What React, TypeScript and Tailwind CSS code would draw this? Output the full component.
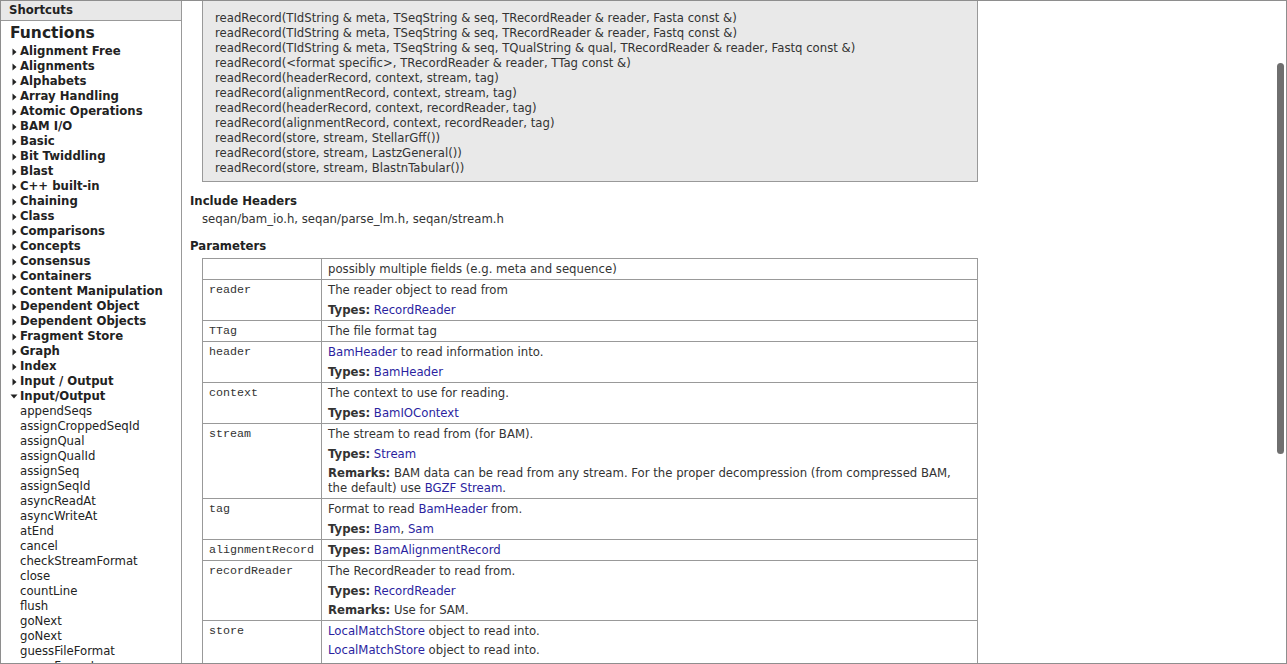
import React from "react";

const sans = "font-['DejaVu_Sans',Verdana,sans-serif]";
const mono = "font-['Liberation_Mono','Courier_New',monospace]";

const groups = [
  "Alignment Free",
  "Alignments",
  "Alphabets",
  "Array Handling",
  "Atomic Operations",
  "BAM I/O",
  "Basic",
  "Bit Twiddling",
  "Blast",
  "C++ built-in",
  "Chaining",
  "Class",
  "Comparisons",
  "Concepts",
  "Consensus",
  "Containers",
  "Content Manipulation",
  "Dependent Object",
  "Dependent Objects",
  "Fragment Store",
  "Graph",
  "Index",
  "Input / Output",
];

const ioFunctions = [
  "appendSeqs",
  "assignCroppedSeqId",
  "assignQual",
  "assignQualId",
  "assignSeq",
  "assignSeqId",
  "asyncReadAt",
  "asyncWriteAt",
  "atEnd",
  "cancel",
  "checkStreamFormat",
  "close",
  "countLine",
  "flush",
  "goNext",
  "goNext",
  "guessFileFormat",
  "guessFormat",
];

const signatures = [
  "readRecord(TIdString & meta, TSeqString & seq, TRecordReader & reader, Fasta const &)",
  "readRecord(TIdString & meta, TSeqString & seq, TRecordReader & reader, Fastq const &)",
  "readRecord(TIdString & meta, TSeqString & seq, TQualString & qual, TRecordReader & reader, Fastq const &)",
  "readRecord(<format specific>, TRecordReader & reader, TTag const &)",
  "readRecord(headerRecord, context, stream, tag)",
  "readRecord(alignmentRecord, context, stream, tag)",
  "readRecord(headerRecord, context, recordReader, tag)",
  "readRecord(alignmentRecord, context, recordReader, tag)",
  "readRecord(store, stream, StellarGff())",
  "readRecord(store, stream, LastzGeneral())",
  "readRecord(store, stream, BlastnTabular())",
];

function A({ children }: { children: React.ReactNode }) {
  return <a className="text-[#2b1f9f]">{children}</a>;
}

function Types({ children }: { children: React.ReactNode }) {
  return (
    <div className="mt-[5px]">
      <b className="font-bold">Types:</b> {children}
    </div>
  );
}

function Remarks({ children }: { children: React.ReactNode }) {
  return (
    <div className="mt-[4px]">
      <b className="font-bold">Remarks:</b> {children}
    </div>
  );
}

function RightArrow() {
  return (
    <svg width="5" height="8" viewBox="0 0 5 8" className="shrink-0">
      <path d="M0.5 0.5 L4.5 4 L0.5 7.5 Z" fill="#222" />
    </svg>
  );
}

function DownArrow() {
  return (
    <svg width="8" height="5" viewBox="0 0 8 5" className="shrink-0">
      <path d="M0.5 0.5 L7.5 0.5 L4 4.5 Z" fill="#222" />
    </svg>
  );
}

const params: { name: string; body: React.ReactNode }[] = [
  { name: "", body: <div>possibly multiple fields (e.g. meta and sequence)</div> },
  {
    name: "reader",
    body: (
      <>
        <div>The reader object to read from</div>
        <Types>
          <A>RecordReader</A>
        </Types>
      </>
    ),
  },
  { name: "TTag", body: <div>The file format tag</div> },
  {
    name: "header",
    body: (
      <>
        <div>
          <A>BamHeader</A> to read information into.
        </div>
        <Types>
          <A>BamHeader</A>
        </Types>
      </>
    ),
  },
  {
    name: "context",
    body: (
      <>
        <div>The context to use for reading.</div>
        <Types>
          <A>BamIOContext</A>
        </Types>
      </>
    ),
  },
  {
    name: "stream",
    body: (
      <>
        <div>The stream to read from (for BAM).</div>
        <Types>
          <A>Stream</A>
        </Types>
        <Remarks>
          BAM data can be read from any stream. For the proper decompression (from compressed BAM,
          the default) use <A>BGZF Stream</A>.
        </Remarks>
      </>
    ),
  },
  {
    name: "tag",
    body: (
      <>
        <div>
          Format to read <A>BamHeader</A> from.
        </div>
        <Types>
          <A>Bam</A>, <A>Sam</A>
        </Types>
      </>
    ),
  },
  {
    name: "alignmentRecord",
    body: (
      <div>
        <b className="font-bold">Types:</b> <A>BamAlignmentRecord</A>
      </div>
    ),
  },
  {
    name: "recordReader",
    body: (
      <>
        <div>The RecordReader to read from.</div>
        <Types>
          <A>RecordReader</A>
        </Types>
        <Remarks>Use for SAM.</Remarks>
      </>
    ),
  },
  {
    name: "store",
    body: (
      <>
        <div>
          <A>LocalMatchStore</A> object to read into.
        </div>
        <div className="mt-[4px]">
          <A>LocalMatchStore</A> object to read into.
        </div>
      </>
    ),
  },
];

export default function App() {
  return (
    <div
      className={`relative flex h-[664px] w-[1287px] overflow-hidden border border-[#8e8e8e] bg-white text-[#333] ${sans} text-[11.7px] leading-[15px]`}
    >
      {/* Sidebar */}
      <aside className="w-[181px] shrink-0 border-r border-[#999]">
        <div className="h-[20px] border-b border-[#999] bg-[#e8e8e8] pl-[8px] pt-[2px] font-bold text-[#222]">
          Shortcuts
        </div>
        <div className="mt-[2px] h-[21px] pl-[9px] text-[15.5px] leading-[21px] font-bold text-[#222]">
          Functions
        </div>
        <ul className="text-[#222]">
          {groups.map((g) => (
            <li key={g} className="flex h-[15px] items-center gap-[3px] pl-[11px] font-bold">
              <RightArrow />
              <span>{g}</span>
            </li>
          ))}
          <li className="flex h-[15px] items-center gap-[2px] pl-[9px] font-bold">
            <DownArrow />
            <span>Input/Output</span>
          </li>
          {ioFunctions.map((f, i) => (
            <li key={f + i} className="h-[15px] pl-[19px]">
              {f}
            </li>
          ))}
        </ul>
      </aside>

      {/* Main content */}
      <main className="min-w-0 flex-1 pl-[8px]">
        <div className="ml-[12px] w-[776px] border-x border-b border-[#999] bg-[#e9e9e9] pt-[10px] pb-[5px] pl-[12px]">
          {signatures.map((s) => (
            <div key={s} className="whitespace-nowrap">
              {s}
            </div>
          ))}
        </div>

        <h3 className="mt-[12px] font-bold text-[#222]">Include Headers</h3>
        <div className="mt-[3px] pl-[12px]">seqan/bam_io.h, seqan/parse_lm.h, seqan/stream.h</div>

        <h3 className="mt-[12px] font-bold text-[#222]">Parameters</h3>
        <table className="mt-[4px] ml-[12px] w-[776px] border-collapse">
          <tbody>
            {params.map((p, i) => (
              <tr key={i}>
                <td
                  className={`w-[119px] border border-[#999] pt-[3px] pb-[2px] pl-[6px] align-top ${mono} text-[11.67px] text-[#333]`}
                >
                  {p.name}
                </td>
                <td
                  className={`border border-[#999] pt-[3px] pl-[6px] pr-[6px] align-top ${
                    i === params.length - 1 ? "pb-[8px]" : "pb-[2px]"
                  }`}
                >
                  {p.body}
                </td>
              </tr>
            ))}
          </tbody>
        </table>
      </main>

      {/* overlay scrollbar thumb */}
      <div className="absolute top-[62px] left-[1276px] h-[391px] w-[7px] rounded-full bg-[#6f6f6f]" />
    </div>
  );
}
